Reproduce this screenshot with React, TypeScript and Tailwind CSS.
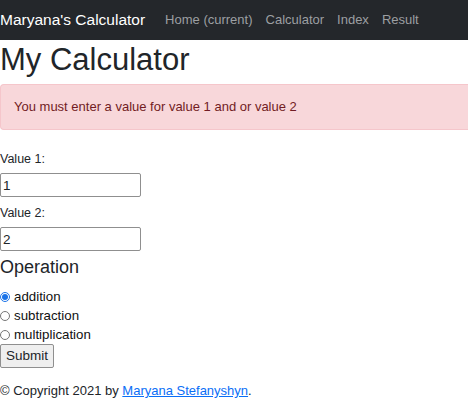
export default function App() {
  return (
    <div className="min-h-screen bg-white text-[#212529] font-['Liberation_Sans',Arial,sans-serif]">
      <nav className="h-[40px] bg-[#24272b] flex items-center">
        <a className="text-white text-[15.5px] mr-[20px]">Maryana's Calculator</a>
        <ul className="flex gap-[13px] text-[13px] text-[#9c9fa2]">
          <li>Home (current)</li>
          <li>Calculator</li>
          <li>Index</li>
          <li>Result</li>
        </ul>
      </nav>
      <h1 className="text-[31px] leading-[36px] mt-[2px] mb-[6px]">My Calculator</h1>
      <div className="bg-[#f8d7da] border border-r-0 border-[#f5c6cb] rounded-l-[4px] text-[#721c24] text-[13px] px-[13px] py-[12px] leading-[20px]">
        You must enter a value for value 1 and or value 2
      </div>
      <form className="mt-[20px] text-[12.5px]">
        <label className="block leading-[18px] mb-[5px]">Value 1:</label>
        <input
          defaultValue="1"
          className="block w-[141px] h-[24px] border border-[#8f8f8f] rounded-[2px] px-[2px] text-[13.5px]"
        />
        <label className="block leading-[18px] mt-[7px] mb-[5px]">Value 2:</label>
        <input
          defaultValue="2"
          className="block w-[141px] h-[24px] border border-[#8f8f8f] rounded-[2px] px-[2px] text-[13.5px]"
        />
        <h4 className="text-[18px] leading-[22px] mt-[5px] mb-[9px]">Operation</h4>
        <div className="flex flex-col text-[13.3px] leading-[19px] text-[#111]">
          <label className="flex items-center gap-[4px]">
            <input type="radio" name="op" defaultChecked className="m-0 w-[10px] h-[10px] accent-[#1a73e8]" />
            addition
          </label>
          <label className="flex items-center gap-[4px]">
            <input type="radio" name="op" className="m-0 w-[10px] h-[10px]" />
            subtraction
          </label>
          <label className="flex items-center gap-[4px]">
            <input type="radio" name="op" className="m-0 w-[10px] h-[10px]" />
            multiplication
          </label>
        </div>
        <button
          type="button"
          className="block h-[24px] px-[5px] text-[13.5px] bg-[#efefef] border border-[#8f8f8f] rounded-[2px]"
        >
          Submit
        </button>
      </form>
      <footer className="mt-[13px] text-[13px] leading-[20px]">
        © Copyright 2021 by{" "}
        <a href="#" className="text-[#0a6ef6] underline">Maryana Stefanyshyn</a>.
      </footer>
    </div>
  );
}
